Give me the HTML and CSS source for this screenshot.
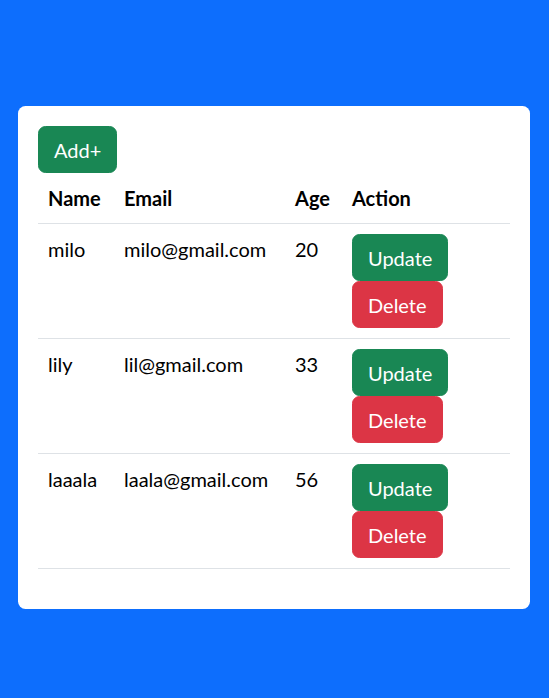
FILE: index.html
```html
<!DOCTYPE html>
<html lang="en">
<head>
<meta charset="utf-8">
<title>Users</title>
<link rel="stylesheet" href="styles.css">
</head>
<body>
<div class="page">
  <div class="card">
    <button class="btn btn-success">Add+</button>
    <table class="table">
      <colgroup>
        <col class="c-name"><col class="c-email"><col class="c-age"><col class="c-action">
      </colgroup>
      <thead>
        <tr><th>Name</th><th>Email</th><th>Age</th><th>Action</th></tr>
      </thead>
      <tbody>
        <tr>
          <td>milo</td><td>milo@gmail.com</td><td>20</td>
          <td><button class="btn btn-success">Update</button> <button class="btn btn-danger">Delete</button></td>
        </tr>
        <tr>
          <td>lily</td><td>lil@gmail.com</td><td>33</td>
          <td><button class="btn btn-success">Update</button> <button class="btn btn-danger">Delete</button></td>
        </tr>
        <tr>
          <td>laaala</td><td>laala@gmail.com</td><td>56</td>
          <td><button class="btn btn-success">Update</button> <button class="btn btn-danger">Delete</button></td>
        </tr>
      </tbody>
    </table>
  </div>
</div>
</body>
</html>
```
FILE: styles.css
```css
html, body {
  margin: 0;
  padding: 0;
}
body {
  background: #0d6efd;
  font-family: "Segoe UI", "Lato", "Liberation Sans", sans-serif;
  font-size: 20px;
  line-height: 30px;
  color: #000;
}
.page {
  min-height: 698px;
  box-sizing: border-box;
  padding: 106px 19px 0 18px;
  display: flex;
  justify-content: center;
  align-items: flex-start;
}
.card {
  width: 512px;
  box-sizing: border-box;
  background: #fff;
  border-radius: 7.5px;
  padding: 20px 20px 20px;
}
.btn {
  display: inline-block;
  font-family: inherit;
  font-size: 20px;
  line-height: 30px;
  padding: 7.5px 15px;
  border: 1px solid transparent;
  border-radius: 7.5px;
  color: #fff;
  cursor: pointer;
  vertical-align: middle;
  margin: 0;
}
.btn-success {
  background: #198754;
  border-color: #198754;
}
.btn-danger {
  background: #dc3545;
  border-color: #dc3545;
}
.table {
  width: 472px;
  table-layout: fixed;
  border-collapse: collapse;
  margin: 0 0 20px;
  vertical-align: top;
}
.c-name { width: 78px; }
.c-email { width: 171px; }
.c-age { width: 57px; }
.c-action { width: 166px; }
.table th,
.table td {
  padding: 10px 8px 10px;
  border-bottom: 1px solid #dee2e6;
  text-align: left;
  vertical-align: top;
  white-space: nowrap;
}
.table th:first-child,
.table td:first-child {
  padding-left: 10px;
}
.table td:last-child {
  white-space: normal;
  line-height: 0;
}
.table th {
  font-weight: 700;
}
```
